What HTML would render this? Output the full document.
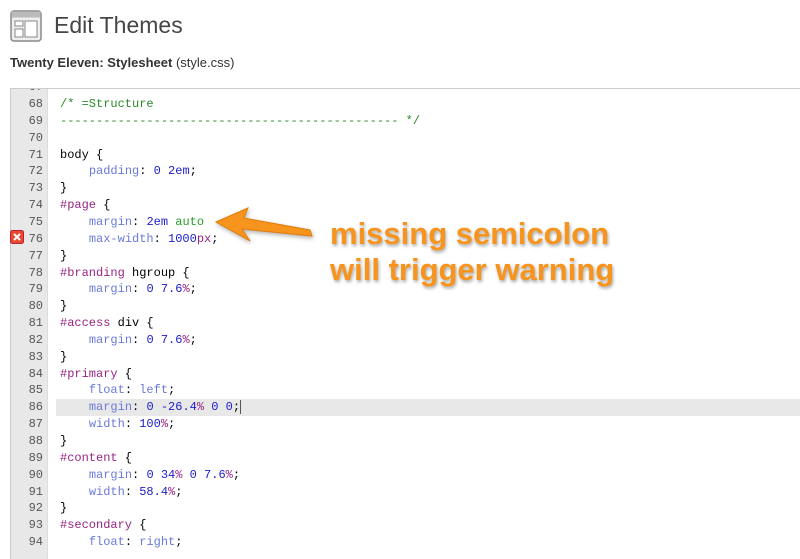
<!DOCTYPE html>
<html><head><meta charset="utf-8"><style>
body{margin:0;width:800px;height:550px;overflow:hidden;background:#fff;font-family:"Liberation Sans",sans-serif;position:relative}
.h1{position:absolute;left:54px;top:12px;font-size:23px;color:#464646}
.sub{position:absolute;left:10px;top:55px;font-size:13px;color:#333}
.box{position:absolute;left:10px;top:88px;width:800px;height:470px;border-top:1px solid #ccc;border-left:1px solid #ccc;overflow:hidden}
.gut{position:absolute;left:0;top:0;width:36px;height:100%;background:#e8e8e8;border-right:1px solid #ddd}
.ln{position:absolute;left:0;height:17px;font:12px/17px "Liberation Mono",monospace;white-space:pre;width:800px}
.n{display:inline-block;width:32px;text-align:right;color:#555}
.c{position:absolute;left:49px;top:0}
.cm{color:#2b8a2b}.p{color:#6b7ad8}.v{color:#1c1ccc}.s{color:#972584}.g{color:#23a023}
.ann{position:absolute;left:330px;font:bold 31px/36px "Liberation Sans",sans-serif;color:#f7941d;text-shadow:1px 2px 3px rgba(0,0,0,.35)}
</style></head><body>
<svg style="position:absolute;left:10px;top:10px" width="32" height="32" viewBox="0 0 32 32">
<rect x="1" y="1" width="30" height="30" rx="3" fill="#eee" stroke="#888" stroke-width="1.5"/>
<rect x="1.5" y="1.5" width="29" height="6" fill="#bbb"/>
<rect x="5" y="11" width="8" height="5" fill="#fff" stroke="#888"/>
<rect x="5" y="19" width="8" height="8" fill="#fff" stroke="#888"/>
<rect x="15" y="11" width="12" height="16" fill="#fff" stroke="#888"/>
</svg>
<div class="h1">Edit Themes</div>
<div class="sub"><b>Twenty Eleven: Stylesheet</b> (style.css)</div>
<div class="box">
<div class="gut"></div>
<div id="code"></div>
</div>
<svg style="position:absolute;left:10px;top:230px" width="14" height="14"><rect x="0.5" y="0.5" width="13" height="13" rx="2" fill="#e8482e" stroke="#b23"/><path d="M4 4L10 10M10 4L4 10" stroke="#fff" stroke-width="2"/></svg>
<svg style="position:absolute;left:210px;top:205px" width="110" height="40"><path d="M6 17 L38 3 L34 13 L100 25 L102 31 L32 24 L40 36 Z" fill="#f7941d" stroke="#e07d0a" stroke-width="1" style="filter:drop-shadow(1px 2px 2px rgba(0,0,0,.3))"/></svg>
<div class="ann" style="top:216px">missing semicolon</div>
<div class="ann" style="top:252px">will trigger warning</div>
<script>
var L=[
[67,''],
[68,'<span class="cm">/* =Structure</span>'],
[69,'<span class="cm">----------------------------------------------- */</span>'],
[70,''],
[71,'body {'],
[72,'    <span class="p">padding</span>: <span class="v">0 2em</span>;'],
[73,'}'],
[74,'<span class="s">#page</span> {'],
[75,'    <span class="p">margin</span>: <span class="v">2em</span> <span class="g">auto</span>'],
[76,'    <span class="p">max-width</span>: <span class="v">1000</span><span class="s">px</span>;'],
[77,'}'],
[78,'<span class="s">#branding</span> hgroup {'],
[79,'    <span class="p">margin</span>: <span class="v">0 7.6</span><span class="s">%</span>;'],
[80,'}'],
[81,'<span class="s">#access</span> div {'],
[82,'    <span class="p">margin</span>: <span class="v">0 7.6</span><span class="s">%</span>;'],
[83,'}'],
[84,'<span class="s">#primary</span> {'],
[85,'    <span class="p">float</span>: <span class="p">left</span>;'],
[86,'    <span class="p">margin</span>: <span class="v">0 -26.4</span><span class="s">%</span> <span class="v">0 0</span>;<span style="border-left:1px solid #555"></span>'],
[87,'    <span class="p">width</span>: <span class="v">100</span><span class="s">%</span>;'],
[88,'}'],
[89,'<span class="s">#content</span> {'],
[90,'    <span class="p">margin</span>: <span class="v">0 34</span><span class="s">%</span> <span class="v">0 7.6</span><span class="s">%</span>;'],
[91,'    <span class="p">width</span>: <span class="v">58.4</span><span class="s">%</span>;'],
[92,'}'],
[93,'<span class="s">#secondary</span> {'],
[94,'    <span class="p">float</span>: <span class="p">right</span>;']
];
var h='';
L.forEach(function(l,i){
var top=(i-1)*16.85+7;
h+='<div class="ln" style="top:'+top+'px">'+(l[0]==86?'<div style="position:absolute;left:45px;top:0;width:760px;height:17px;background:#e8e8e8"></div>':'')+'<span class="n">'+l[0]+'</span><span class="c">'+l[1]+'</span></div>';
});
document.getElementById('code').innerHTML=h;
</script>
</body></html>
